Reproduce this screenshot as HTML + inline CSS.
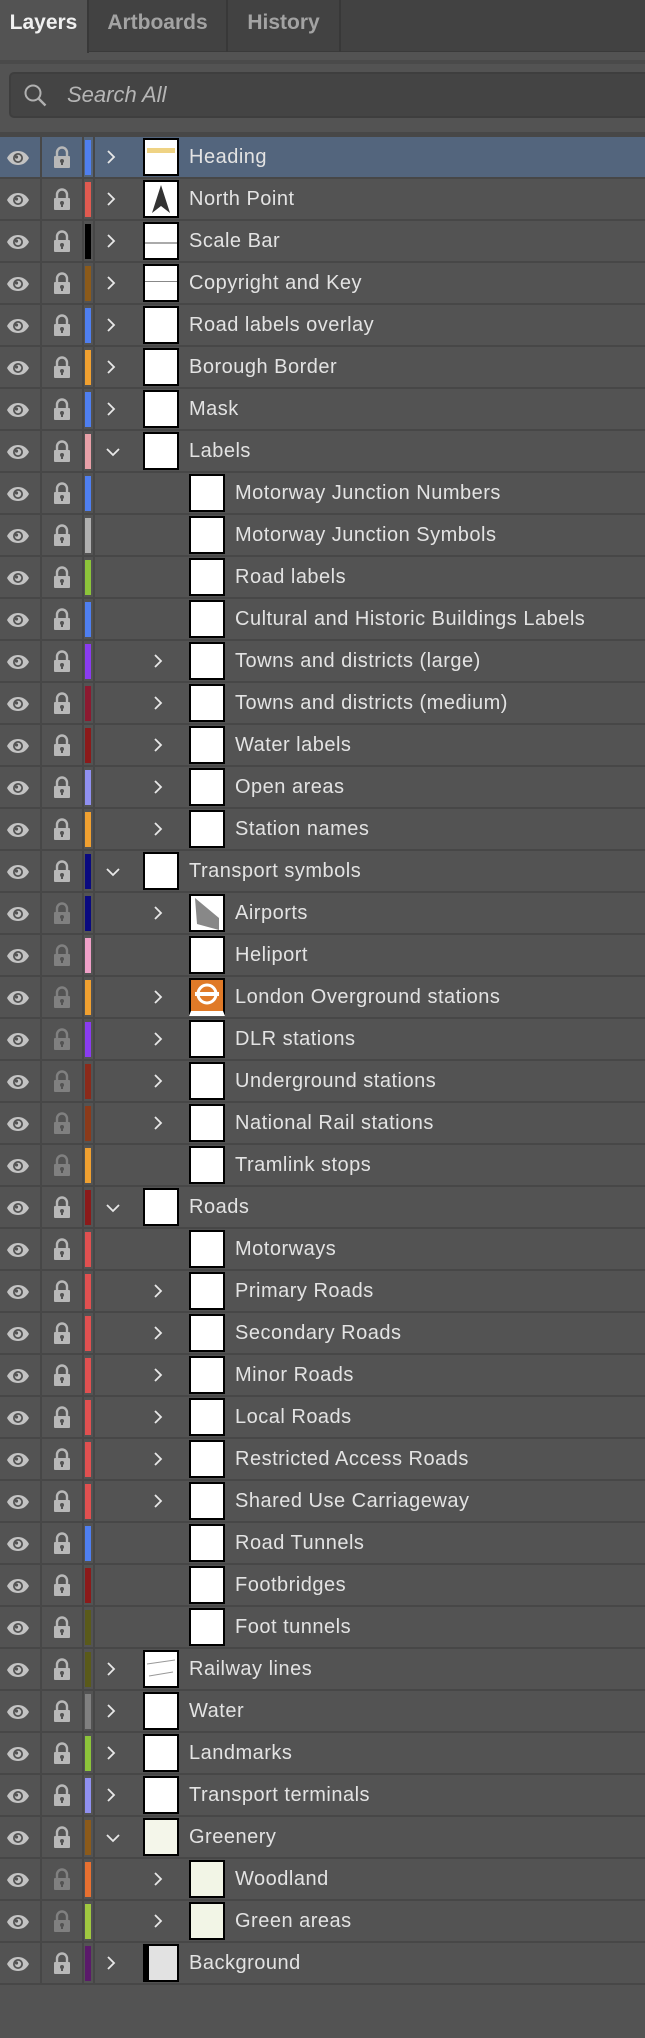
<!DOCTYPE html>
<html><head><meta charset="utf-8"><style>
*{margin:0;padding:0;box-sizing:border-box}
body{width:645px;height:2038px;background:#535353;font-family:"Liberation Sans",sans-serif;position:relative;overflow:hidden}
.tabs{position:absolute;left:0;top:0;width:645px;height:52px;background:#424242;border-bottom:1px solid #3a3a3a}
.tab{position:absolute;top:0;height:52px;line-height:46px;font-size:21px;font-weight:bold;color:#a3a3a3;text-align:center;border-right:2px solid #383838}
.tab.a{background:#535353;color:#f0f0f0;height:53px;border-right:2px solid #383838}
.band{position:absolute;left:0;top:60px;width:645px;height:4px;background:#4a4a4a}
.search{position:absolute;left:9px;top:72px;width:650px;height:46px;background:#444;border:2px solid #3e3e3e;border-radius:5px}
.search span{position:absolute;left:56px;top:8px;font-size:22px;font-style:italic;color:#b5b5b5}
.line{position:absolute;left:0;top:132px;width:645px;height:5px;background:#474747}
.rows{position:absolute;left:0;top:137px;width:645px}
.r{position:relative;height:42px;border-bottom:2px solid #474747}
.r.s{background:#53657d}
.r::before{content:"";position:absolute;left:40px;top:0;width:2px;height:40px;background:#474747}
.r::after{content:"";position:absolute;left:82px;top:0;width:2px;height:40px;background:#474747}
.sep{position:absolute;left:93px;top:0;width:2px;height:40px;background:#474747}
.eye{position:absolute;left:6px;top:13px}
.lk{position:absolute;left:53px;top:9px}
.bar{position:absolute;left:85px;top:3px;width:6px;height:35px}
.ch{position:absolute;top:13px}
.th{position:absolute;top:1px;width:36px;height:38px;background:#fff;border:2px solid #000;overflow:hidden}
.t{position:absolute;top:9px;font-size:20px;letter-spacing:.5px;color:#e3e3e3;white-space:nowrap}
.l0 .ch{left:106px}.l0 .th{left:143px}.l0 .t{left:189px}
.l1 .ch{left:153px}.l1 .th{left:189px}.l1 .t{left:235px}
.d .lk{opacity:.45}
</style></head><body>
<svg width="0" height="0" style="position:absolute"><defs>
<symbol id="e" viewBox="0 0 24 16"><path d="M1 8C4 2.5 8 1 12 1s8 1.5 11 7c-3 5.5-7 7-11 7S4 13.5 1 8z" fill="#c3c3c3"/><circle cx="12" cy="8" r="5" fill="#535353"/><circle cx="12" cy="8" r="3.2" fill="#c3c3c3"/><circle cx="10.5" cy="7" r="1.6" fill="#535353"/></symbol>
<symbol id="k" viewBox="0 0 18 22"><path d="M4 10V6.5a5 5 0 0 1 10 0V10" fill="none" stroke="#b8b8b8" stroke-width="2.4"/><rect x="1" y="10" width="16" height="12" rx="1" fill="#b8b8b8"/><circle cx="9" cy="15" r="2" fill="#535353"/><rect x="8" y="15" width="2" height="4" fill="#535353"/></symbol>
<symbol id="c" viewBox="0 0 10 14"><path d="M2 1l6 6-6 6" fill="none" stroke="#e8e8e8" stroke-width="1.8"/></symbol>
<symbol id="v" viewBox="0 0 14 10"><path d="M1 2l6 6 6-6" fill="none" stroke="#e8e8e8" stroke-width="1.8"/></symbol>
</defs></svg>
<div class="tabs">
<div class="tab a" style="left:0;width:89px">Layers</div>
<div class="tab" style="left:89px;width:139px">Artboards</div>
<div class="tab" style="left:228px;width:113px">History</div>
</div>
<div class="band"></div>
<div class="search"><svg style="position:absolute;left:12px;top:9px" width="26" height="26" viewBox="0 0 26 26"><circle cx="10" cy="10" r="7.5" fill="none" stroke="#b0b0b0" stroke-width="2"/><path d="M15.5 15.5l7 7" stroke="#b0b0b0" stroke-width="2.4"/></svg><span>Search All</span></div>
<div class="line"></div>
<div class="rows">
<div class="r l0 s"><svg class="eye" width="24" height="16"><use href="#e"/></svg><svg class="lk" width="18" height="22"><use href="#k"/></svg><div class="bar" style="background:#4f7ff0"></div><div class="sep"></div><svg class="ch" width="10" height="14"><use href="#c"/></svg><div class="th"><div style="margin:8px 2px;height:5px;background:#e8c050;opacity:.7"></div></div><div class="t">Heading</div></div>
<div class="r l0"><svg class="eye" width="24" height="16"><use href="#e"/></svg><svg class="lk" width="18" height="22"><use href="#k"/></svg><div class="bar" style="background:#e05a50"></div><div class="sep"></div><svg class="ch" width="10" height="14"><use href="#c"/></svg><div class="th"><svg width="32" height="34"><path d="M16 3L7 31l9-7 9 7z" fill="#333"/></svg></div><div class="t">North Point</div></div>
<div class="r l0"><svg class="eye" width="24" height="16"><use href="#e"/></svg><svg class="lk" width="18" height="22"><use href="#k"/></svg><div class="bar" style="background:#000"></div><div class="sep"></div><svg class="ch" width="10" height="14"><use href="#c"/></svg><div class="th"><div style="margin-top:18px;height:2px;background:#aaa"></div></div><div class="t">Scale Bar</div></div>
<div class="r l0"><svg class="eye" width="24" height="16"><use href="#e"/></svg><svg class="lk" width="18" height="22"><use href="#k"/></svg><div class="bar" style="background:#8b5a1a"></div><div class="sep"></div><svg class="ch" width="10" height="14"><use href="#c"/></svg><div class="th"><div style="margin-top:15px;height:1px;background:#888"></div></div><div class="t">Copyright and Key</div></div>
<div class="r l0"><svg class="eye" width="24" height="16"><use href="#e"/></svg><svg class="lk" width="18" height="22"><use href="#k"/></svg><div class="bar" style="background:#4f7ff0"></div><div class="sep"></div><svg class="ch" width="10" height="14"><use href="#c"/></svg><div class="th"></div><div class="t">Road labels overlay</div></div>
<div class="r l0"><svg class="eye" width="24" height="16"><use href="#e"/></svg><svg class="lk" width="18" height="22"><use href="#k"/></svg><div class="bar" style="background:#f0a030"></div><div class="sep"></div><svg class="ch" width="10" height="14"><use href="#c"/></svg><div class="th"></div><div class="t">Borough Border</div></div>
<div class="r l0"><svg class="eye" width="24" height="16"><use href="#e"/></svg><svg class="lk" width="18" height="22"><use href="#k"/></svg><div class="bar" style="background:#4f7ff0"></div><div class="sep"></div><svg class="ch" width="10" height="14"><use href="#c"/></svg><div class="th"></div><div class="t">Mask</div></div>
<div class="r l0"><svg class="eye" width="24" height="16"><use href="#e"/></svg><svg class="lk" width="18" height="22"><use href="#k"/></svg><div class="bar" style="background:#e8a0a8"></div><div class="sep"></div><svg class="ch" width="14" height="10" style="top:16px"><use href="#v"/></svg><div class="th"></div><div class="t">Labels</div></div>
<div class="r l1"><svg class="eye" width="24" height="16"><use href="#e"/></svg><svg class="lk" width="18" height="22"><use href="#k"/></svg><div class="bar" style="background:#4f7ff0"></div><div class="sep"></div><div class="th"></div><div class="t">Motorway Junction Numbers</div></div>
<div class="r l1"><svg class="eye" width="24" height="16"><use href="#e"/></svg><svg class="lk" width="18" height="22"><use href="#k"/></svg><div class="bar" style="background:#b0b0b0"></div><div class="sep"></div><div class="th"></div><div class="t">Motorway Junction Symbols</div></div>
<div class="r l1"><svg class="eye" width="24" height="16"><use href="#e"/></svg><svg class="lk" width="18" height="22"><use href="#k"/></svg><div class="bar" style="background:#8cc43a"></div><div class="sep"></div><div class="th"></div><div class="t">Road labels</div></div>
<div class="r l1"><svg class="eye" width="24" height="16"><use href="#e"/></svg><svg class="lk" width="18" height="22"><use href="#k"/></svg><div class="bar" style="background:#4f7ff0"></div><div class="sep"></div><div class="th"></div><div class="t">Cultural and Historic Buildings Labels</div></div>
<div class="r l1"><svg class="eye" width="24" height="16"><use href="#e"/></svg><svg class="lk" width="18" height="22"><use href="#k"/></svg><div class="bar" style="background:#8a3cf0"></div><div class="sep"></div><svg class="ch" width="10" height="14"><use href="#c"/></svg><div class="th"></div><div class="t">Towns and districts (large)</div></div>
<div class="r l1"><svg class="eye" width="24" height="16"><use href="#e"/></svg><svg class="lk" width="18" height="22"><use href="#k"/></svg><div class="bar" style="background:#8b1a30"></div><div class="sep"></div><svg class="ch" width="10" height="14"><use href="#c"/></svg><div class="th"></div><div class="t">Towns and districts (medium)</div></div>
<div class="r l1"><svg class="eye" width="24" height="16"><use href="#e"/></svg><svg class="lk" width="18" height="22"><use href="#k"/></svg><div class="bar" style="background:#8b1a1a"></div><div class="sep"></div><svg class="ch" width="10" height="14"><use href="#c"/></svg><div class="th"></div><div class="t">Water labels</div></div>
<div class="r l1"><svg class="eye" width="24" height="16"><use href="#e"/></svg><svg class="lk" width="18" height="22"><use href="#k"/></svg><div class="bar" style="background:#9090f0"></div><div class="sep"></div><svg class="ch" width="10" height="14"><use href="#c"/></svg><div class="th"></div><div class="t">Open areas</div></div>
<div class="r l1"><svg class="eye" width="24" height="16"><use href="#e"/></svg><svg class="lk" width="18" height="22"><use href="#k"/></svg><div class="bar" style="background:#f0a030"></div><div class="sep"></div><svg class="ch" width="10" height="14"><use href="#c"/></svg><div class="th"></div><div class="t">Station names</div></div>
<div class="r l0"><svg class="eye" width="24" height="16"><use href="#e"/></svg><svg class="lk" width="18" height="22"><use href="#k"/></svg><div class="bar" style="background:#0a0a80"></div><div class="sep"></div><svg class="ch" width="14" height="10" style="top:16px"><use href="#v"/></svg><div class="th"></div><div class="t">Transport symbols</div></div>
<div class="r l1 d"><svg class="eye" width="24" height="16"><use href="#e"/></svg><svg class="lk" width="18" height="22"><use href="#k"/></svg><div class="bar" style="background:#0a0a80"></div><div class="sep"></div><svg class="ch" width="10" height="14"><use href="#c"/></svg><div class="th"><svg width="32" height="34"><path d="M4 2l24 20v12L6 28z" fill="#888"/></svg></div><div class="t">Airports</div></div>
<div class="r l1 d"><svg class="eye" width="24" height="16"><use href="#e"/></svg><svg class="lk" width="18" height="22"><use href="#k"/></svg><div class="bar" style="background:#f0a0c8"></div><div class="sep"></div><div class="th"></div><div class="t">Heliport</div></div>
<div class="r l1 d"><svg class="eye" width="24" height="16"><use href="#e"/></svg><svg class="lk" width="18" height="22"><use href="#k"/></svg><div class="bar" style="background:#f0a030"></div><div class="sep"></div><svg class="ch" width="10" height="14"><use href="#c"/></svg><div class="th" style="background:#e07a28;border-bottom:5px solid #fff"><svg width="32" height="28"><circle cx="16" cy="14" r="9" fill="none" stroke="#fff" stroke-width="3"/><rect x="4" y="12" width="24" height="4" fill="#fff"/></svg></div><div class="t">London Overground stations</div></div>
<div class="r l1 d"><svg class="eye" width="24" height="16"><use href="#e"/></svg><svg class="lk" width="18" height="22"><use href="#k"/></svg><div class="bar" style="background:#8a3cf0"></div><div class="sep"></div><svg class="ch" width="10" height="14"><use href="#c"/></svg><div class="th"></div><div class="t">DLR stations</div></div>
<div class="r l1 d"><svg class="eye" width="24" height="16"><use href="#e"/></svg><svg class="lk" width="18" height="22"><use href="#k"/></svg><div class="bar" style="background:#8b2a1a"></div><div class="sep"></div><svg class="ch" width="10" height="14"><use href="#c"/></svg><div class="th"></div><div class="t">Underground stations</div></div>
<div class="r l1 d"><svg class="eye" width="24" height="16"><use href="#e"/></svg><svg class="lk" width="18" height="22"><use href="#k"/></svg><div class="bar" style="background:#8b3a1a"></div><div class="sep"></div><svg class="ch" width="10" height="14"><use href="#c"/></svg><div class="th"></div><div class="t">National Rail stations</div></div>
<div class="r l1 d"><svg class="eye" width="24" height="16"><use href="#e"/></svg><svg class="lk" width="18" height="22"><use href="#k"/></svg><div class="bar" style="background:#f0a030"></div><div class="sep"></div><div class="th"></div><div class="t">Tramlink stops</div></div>
<div class="r l0"><svg class="eye" width="24" height="16"><use href="#e"/></svg><svg class="lk" width="18" height="22"><use href="#k"/></svg><div class="bar" style="background:#8b1a1a"></div><div class="sep"></div><svg class="ch" width="14" height="10" style="top:16px"><use href="#v"/></svg><div class="th"></div><div class="t">Roads</div></div>
<div class="r l1"><svg class="eye" width="24" height="16"><use href="#e"/></svg><svg class="lk" width="18" height="22"><use href="#k"/></svg><div class="bar" style="background:#e05050"></div><div class="sep"></div><div class="th"></div><div class="t">Motorways</div></div>
<div class="r l1"><svg class="eye" width="24" height="16"><use href="#e"/></svg><svg class="lk" width="18" height="22"><use href="#k"/></svg><div class="bar" style="background:#e05050"></div><div class="sep"></div><svg class="ch" width="10" height="14"><use href="#c"/></svg><div class="th"></div><div class="t">Primary Roads</div></div>
<div class="r l1"><svg class="eye" width="24" height="16"><use href="#e"/></svg><svg class="lk" width="18" height="22"><use href="#k"/></svg><div class="bar" style="background:#e05050"></div><div class="sep"></div><svg class="ch" width="10" height="14"><use href="#c"/></svg><div class="th"></div><div class="t">Secondary Roads</div></div>
<div class="r l1"><svg class="eye" width="24" height="16"><use href="#e"/></svg><svg class="lk" width="18" height="22"><use href="#k"/></svg><div class="bar" style="background:#e05050"></div><div class="sep"></div><svg class="ch" width="10" height="14"><use href="#c"/></svg><div class="th"></div><div class="t">Minor Roads</div></div>
<div class="r l1"><svg class="eye" width="24" height="16"><use href="#e"/></svg><svg class="lk" width="18" height="22"><use href="#k"/></svg><div class="bar" style="background:#e05050"></div><div class="sep"></div><svg class="ch" width="10" height="14"><use href="#c"/></svg><div class="th"></div><div class="t">Local Roads</div></div>
<div class="r l1"><svg class="eye" width="24" height="16"><use href="#e"/></svg><svg class="lk" width="18" height="22"><use href="#k"/></svg><div class="bar" style="background:#e05050"></div><div class="sep"></div><svg class="ch" width="10" height="14"><use href="#c"/></svg><div class="th"></div><div class="t">Restricted Access Roads</div></div>
<div class="r l1"><svg class="eye" width="24" height="16"><use href="#e"/></svg><svg class="lk" width="18" height="22"><use href="#k"/></svg><div class="bar" style="background:#e05050"></div><div class="sep"></div><svg class="ch" width="10" height="14"><use href="#c"/></svg><div class="th"></div><div class="t">Shared Use Carriageway</div></div>
<div class="r l1"><svg class="eye" width="24" height="16"><use href="#e"/></svg><svg class="lk" width="18" height="22"><use href="#k"/></svg><div class="bar" style="background:#4f7ff0"></div><div class="sep"></div><div class="th"></div><div class="t">Road Tunnels</div></div>
<div class="r l1"><svg class="eye" width="24" height="16"><use href="#e"/></svg><svg class="lk" width="18" height="22"><use href="#k"/></svg><div class="bar" style="background:#8b1a1a"></div><div class="sep"></div><div class="th"></div><div class="t">Footbridges</div></div>
<div class="r l1"><svg class="eye" width="24" height="16"><use href="#e"/></svg><svg class="lk" width="18" height="22"><use href="#k"/></svg><div class="bar" style="background:#5a5a1a"></div><div class="sep"></div><div class="th"></div><div class="t">Foot tunnels</div></div>
<div class="r l0"><svg class="eye" width="24" height="16"><use href="#e"/></svg><svg class="lk" width="18" height="22"><use href="#k"/></svg><div class="bar" style="background:#5a5a1a"></div><div class="sep"></div><svg class="ch" width="10" height="14"><use href="#c"/></svg><div class="th"><svg width="32" height="34"><path d="M2 12L30 8M4 24L28 20" stroke="#999" stroke-width="1"/></svg></div><div class="t">Railway lines</div></div>
<div class="r l0"><svg class="eye" width="24" height="16"><use href="#e"/></svg><svg class="lk" width="18" height="22"><use href="#k"/></svg><div class="bar" style="background:#808080"></div><div class="sep"></div><svg class="ch" width="10" height="14"><use href="#c"/></svg><div class="th"></div><div class="t">Water</div></div>
<div class="r l0"><svg class="eye" width="24" height="16"><use href="#e"/></svg><svg class="lk" width="18" height="22"><use href="#k"/></svg><div class="bar" style="background:#8cc43a"></div><div class="sep"></div><svg class="ch" width="10" height="14"><use href="#c"/></svg><div class="th"></div><div class="t">Landmarks</div></div>
<div class="r l0"><svg class="eye" width="24" height="16"><use href="#e"/></svg><svg class="lk" width="18" height="22"><use href="#k"/></svg><div class="bar" style="background:#9090f0"></div><div class="sep"></div><svg class="ch" width="10" height="14"><use href="#c"/></svg><div class="th"></div><div class="t">Transport terminals</div></div>
<div class="r l0"><svg class="eye" width="24" height="16"><use href="#e"/></svg><svg class="lk" width="18" height="22"><use href="#k"/></svg><div class="bar" style="background:#8b5a1a"></div><div class="sep"></div><svg class="ch" width="14" height="10" style="top:16px"><use href="#v"/></svg><div class="th" style="background:#f4f6ea"></div><div class="t">Greenery</div></div>
<div class="r l1 d"><svg class="eye" width="24" height="16"><use href="#e"/></svg><svg class="lk" width="18" height="22"><use href="#k"/></svg><div class="bar" style="background:#e87030"></div><div class="sep"></div><svg class="ch" width="10" height="14"><use href="#c"/></svg><div class="th" style="background:#f2f5e6"></div><div class="t">Woodland</div></div>
<div class="r l1 d"><svg class="eye" width="24" height="16"><use href="#e"/></svg><svg class="lk" width="18" height="22"><use href="#k"/></svg><div class="bar" style="background:#a0c840"></div><div class="sep"></div><svg class="ch" width="10" height="14"><use href="#c"/></svg><div class="th" style="background:#f2f5e6"></div><div class="t">Green areas</div></div>
<div class="r l0"><svg class="eye" width="24" height="16"><use href="#e"/></svg><svg class="lk" width="18" height="22"><use href="#k"/></svg><div class="bar" style="background:#5a1a6a"></div><div class="sep"></div><svg class="ch" width="10" height="14"><use href="#c"/></svg><div class="th" style="background:#e2e2e2;border-left:6px solid #000"></div><div class="t">Background</div></div>
</div>
</body></html>
